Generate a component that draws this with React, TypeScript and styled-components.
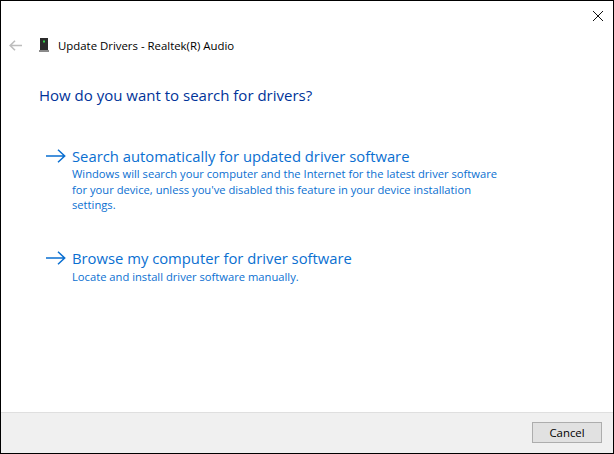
import React from "react";
import styled, { createGlobalStyle } from "styled-components";

const Global = createGlobalStyle`
  html, body { margin: 0; padding: 0; background: #fff; }
  #root { width: 614px; height: 454px; }
`;

const Win = styled.div`
  width: 614px; height: 454px; box-sizing: border-box;
  border: 1px solid #000;
  background: #fff;
  display: flex; flex-direction: column;
  font-family: "Open Sans", "Noto Sans", sans-serif;
`;
const TitleBar = styled.div`
  height: 29px; display: flex; justify-content: flex-end; align-items: flex-start;
`;
const Close = styled.button`
  width: 30px; height: 29px; padding: 0; border: 0; background: none;
  display: flex; align-items: center; justify-content: center;
`;
const Header = styled.div`
  height: 30px; display: flex; align-items: center; padding-left: 8px;
`;
const Back = styled.span`display: flex; width: 14px; margin-right: 16px;`;
const DeviceIcon = styled.span`display: flex; width: 10px; margin-right: 9px;`;
const HeaderTitle = styled.span`font-size: 11.4px; color: #000; white-space: nowrap;`;
const Main = styled.main`
  flex: 1; padding: 25px 0 0 38px; display: flex; flex-direction: column;
`;
const Heading = styled.h1`
  margin: 0 0 40px; font-size: 15px; line-height: 21px; font-weight: 400; color: #003399; white-space: nowrap;
`;
const Option = styled.div<{ $gap?: number }>`
  display: flex; margin-left: 7px; margin-bottom: ${p => p.$gap ?? 0}px;
`;
const ArrowBox = styled.span`display: flex; width: 20px; margin-right: 6px; height: 20px; align-items: center;`;
const OptionBody = styled.div`display: flex; flex-direction: column; width: 430px;`;
const OptionTitle = styled.div`
  font-size: 14.8px; line-height: 20px; color: #0a6fd1; white-space: nowrap;
`;
const OptionText = styled.div<{ $top?: number }>`
  margin-top: ${p => p.$top ?? 0}px;
  font-size: 11.2px; line-height: 15.5px; color: #0a6fd1;
`;
const Footer = styled.footer`
  height: 40px; box-sizing: content-box; background: #f0f0f0; border-top: 1px solid #dfdfdf;
  display: flex; justify-content: flex-end; align-items: flex-start; padding: 0 11px 0 0;
`;
const CancelBtn = styled.button`
  width: 70px; height: 21px; margin-top: 9px; box-sizing: border-box; padding: 0;
  border: 1px solid #adadad; background: #e1e1e1; color: #000;
  font: 11.4px "Open Sans", "Noto Sans", sans-serif;
`;

const Arrow = () => (
  <svg width="20" height="14" viewBox="0 0 20 14" fill="none" stroke="#0a6fd1" strokeWidth="1.5">
    <path d="M0 7H18.5M12 .8 18.7 7 12 13.2" />
  </svg>
);

export default function App() {
  return (
    <>
      <Global />
      <Win>
        <TitleBar>
          <Close aria-label="Close">
            <svg width="10" height="10" viewBox="0 0 10 10" stroke="#111" strokeWidth="1" fill="none">
              <path d="M0 0 10 10M10 0 0 10" />
            </svg>
          </Close>
        </TitleBar>
        <Header>
          <Back>
            <svg width="13" height="11" viewBox="0 0 13 11" fill="none" stroke="#bdbdbd" strokeWidth="1.6">
              <path d="M13 5.5H1.5M6 .8 1.2 5.5 6 10.2" />
            </svg>
          </Back>
          <DeviceIcon>
            <svg width="10" height="14" viewBox="0 0 10 14">
              <path d="M1 0H9V12H1Z" fill="#2b2b2b" />
              <path d="M0 12H10V14H0Z" fill="#8a8a8a" />
              <path d="M4 2.5H6V4.5H4Z" fill="#35d04a" />
            </svg>
          </DeviceIcon>
          <HeaderTitle>Update Drivers - Realtek(R) Audio</HeaderTitle>
        </Header>
        <Main>
          <Heading>How do you want to search for drivers?</Heading>
          <Option $gap={35}>
            <ArrowBox><Arrow /></ArrowBox>
            <OptionBody>
              <OptionTitle>Search automatically for updated driver software</OptionTitle>
              <OptionText>
                Windows will search your computer and the Internet for the latest driver software for your device, unless you've disabled this feature in your device installation settings.
              </OptionText>
            </OptionBody>
          </Option>
          <Option>
            <ArrowBox><Arrow /></ArrowBox>
            <OptionBody>
              <OptionTitle>Browse my computer for driver software</OptionTitle>
              <OptionText $top={1}>Locate and install driver software manually.</OptionText>
            </OptionBody>
          </Option>
        </Main>
        <Footer>
          <CancelBtn>Cancel</CancelBtn>
        </Footer>
      </Win>
    </>
  );
}
